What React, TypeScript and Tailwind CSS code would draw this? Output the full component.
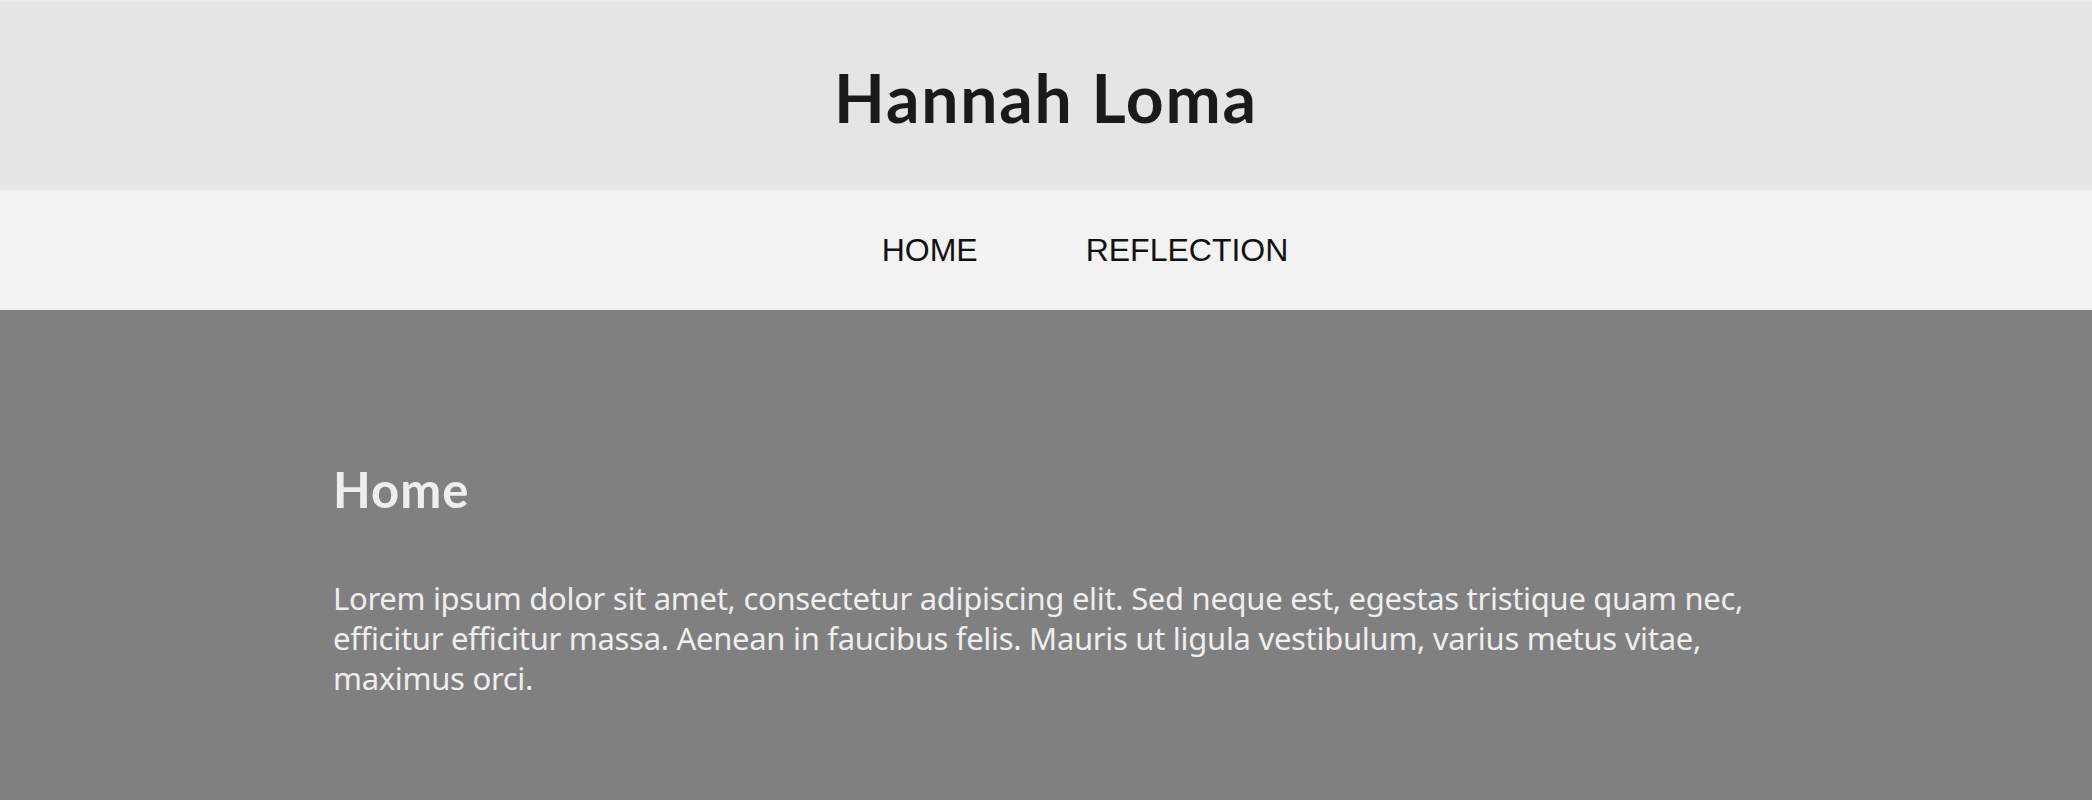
export default function App() {
  return (
    <div className="w-full min-h-[800px] bg-[#808080]">
      <header className="bg-[#e5e5e5] border-t-2 border-[#ececec] h-[190px] flex items-center justify-center">
        <h1 className="text-[#1a1a1a] font-bold text-[66px] tracking-[1.8px] leading-none mt-[4px]" style={{ fontFamily: '"Lato", "Inter", sans-serif' }}>
          Hannah Loma
        </h1>
      </header>
      <nav className="bg-[#f2f2f2] h-[120px] flex items-center justify-center gap-[108px] pl-[78px]" style={{ fontFamily: '"Liberation Sans", Arial, sans-serif' }}>
        <a className="text-[32px] text-[#111] leading-none">HOME</a>
        <a className="text-[32px] text-[#111] leading-none">REFLECTION</a>
      </nav>
      <main className="pl-[333px] pt-[155px] pb-[100px]">
        <h2 className="text-[#eeeeee] font-bold text-[49px] tracking-[1px] leading-none" style={{ fontFamily: '"Lato", "Inter", sans-serif' }}>
          Home
        </h2>
        <p className="mt-[64px] w-[1430px] text-[#eeeeee] text-[31px] leading-[40px] tracking-[-0.3px]" style={{ fontFamily: '"Noto Sans", "Open Sans", sans-serif' }}>
          Lorem ipsum dolor sit amet, consectetur adipiscing elit. Sed neque est, egestas tristique quam nec, efficitur efficitur massa. Aenean in faucibus felis. Mauris ut ligula vestibulum, varius metus vitae, maximus orci.
        </p>
      </main>
    </div>
  );
}
